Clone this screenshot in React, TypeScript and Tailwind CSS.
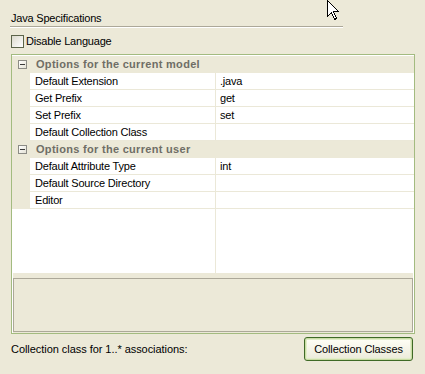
import React from "react";

type Row = { name: string; value?: string };

const groups: { title: string; rows: Row[] }[] = [
  {
    title: "Options for the current model",
    rows: [
      { name: "Default Extension", value: ".java" },
      { name: "Get Prefix", value: "get" },
      { name: "Set Prefix", value: "set" },
      { name: "Default Collection Class" },
    ],
  },
  {
    title: "Options for the current user",
    rows: [
      { name: "Default Attribute Type", value: "int" },
      { name: "Default Source Directory" },
      { name: "Editor" },
    ],
  },
];

const MinusBox = () => (
  <div className="w-[9px] h-[9px] border border-[#8c8c86] bg-gradient-to-br from-white to-[#e4e2d6] flex items-center justify-center">
    <div className="w-[5px] h-[1px] bg-[#3a3a3a]" />
  </div>
);

const Cursor = () => (
  <svg className="absolute left-[327px] top-0" width="13" height="21" viewBox="0 0 13 21">
    <path
      d="M0.5 0.5 L0.5 16.5 L4.5 12.5 L7.5 19.5 L9.5 18.5 L6.5 11.5 L11.5 11.5 Z"
      fill="#ffffff"
      stroke="#000000"
      strokeWidth="1"
      shapeRendering="crispEdges"
    />
  </svg>
);

const App = () => {
  return (
    <div
      className="relative w-[425px] h-[374px] bg-[#ece9d8] overflow-hidden text-black text-[11px] tracking-[-0.2px]"
      style={{ fontFamily: '"Liberation Sans", Arial, sans-serif' }}
    >
      <Cursor />
      <div className="pt-[11px]">
        <div className="ml-[11px] h-[14px] leading-[14px]">Java Specifications</div>
        <div className="mt-[1px] ml-[10px] w-[333px] h-[2px] border-t border-[#aca899] border-b border-b-white" />

        <label className="mt-[7px] ml-[11px] h-[13px] flex items-center">
          <span className="w-[13px] h-[13px] border border-[#5c6449] bg-gradient-to-br from-[#dcdacd] to-white" />
          <span className="ml-[2px] leading-[13px]">Disable Language</span>
        </label>

        <div className="mt-[6px] ml-[11px] w-[404px] h-[280px] border border-[#a3bb80] bg-white flex flex-col">
          <div className="mt-[1px] h-[217px] flex flex-col">
            {groups.map((g) => (
              <React.Fragment key={g.title}>
                <div className="h-[17px] flex items-center bg-[#ece9d8]">
                  <div className="ml-[6px]">
                    <MinusBox />
                  </div>
                  <span className="ml-[9px] font-bold text-[#6f6e66] tracking-[0.3px] leading-[17px]">
                    {g.title}
                  </span>
                </div>
                {g.rows.map((r) => (
                  <div key={r.name} className="h-[17px] flex">
                    <div className="w-[18px] bg-[#ece9d8]" />
                    <div className="w-[185px] border-b border-[#ebe8d8] pl-[5px] leading-[16px]">{r.name}</div>
                    <div className="flex-1 border-l border-b border-[#ebe8d8] pl-[4px] leading-[16px]">
                      {r.value}
                    </div>
                  </div>
                ))}
              </React.Fragment>
            ))}
            <div className="flex-1 flex">
              <div className="w-[203px]" />
              <div className="flex-1 border-l border-[#ebe8d8]" />
            </div>
          </div>
          <div className="mx-[1px] pt-[5px] pb-[1px] bg-[#ece9d8]">
            <div className="h-[54px] border border-[#aca899] bg-[#ece9d8]" />
          </div>
        </div>

        <div className="mt-[3px] ml-[11px] w-[402px] flex items-center justify-between">
          <span className="leading-[14px] tracking-[-0.05px]">Collection class for 1..* associations:</span>
          <button className="w-[109px] h-[24px] rounded-[3px] border border-[#3f6a26] bg-gradient-to-b from-[#fffff7] to-[#ebead9] shadow-[inset_0_0_0_1px_#c9dca4,inset_0_0_0_2px_#e2edc9] text-[11px] text-black tracking-[-0.1px]">
            Collection Classes
          </button>
        </div>
      </div>
    </div>
  );
};

export default App;
